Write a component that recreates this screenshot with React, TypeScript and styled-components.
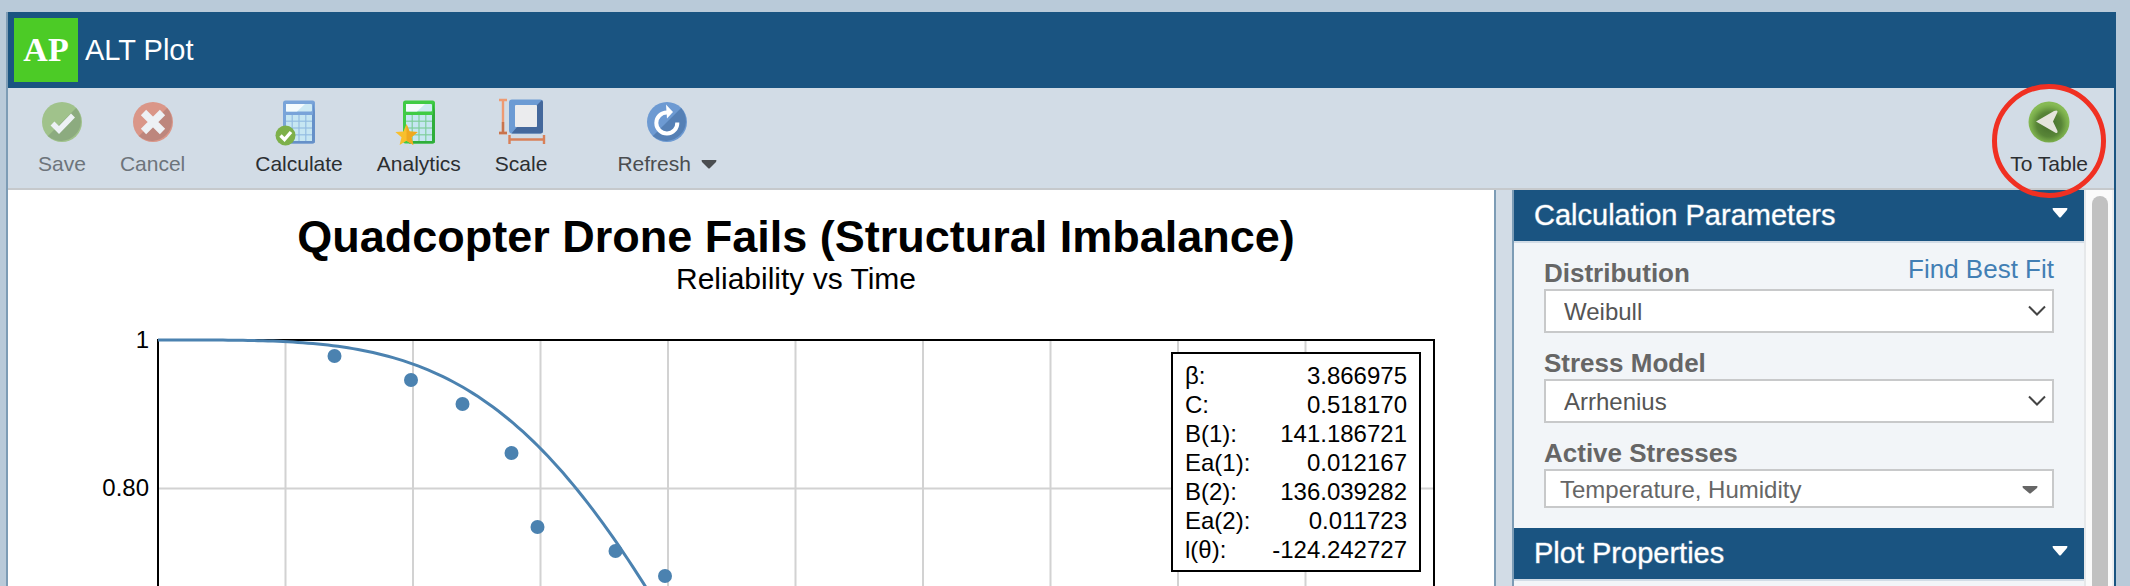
import React from "react";
import styled, { createGlobalStyle } from "styled-components";

const navy = "#1a5481";
const edge = "#7d9cb5";
const bar = "#d2dce6";
const steel = "#4b82b0";

const GlobalStyle = createGlobalStyle`
  *, *::before, *::after { box-sizing: border-box; }
  body {
    margin: 0;
    background: #b9cad9;
    font-family: "Liberation Sans", Arial, sans-serif;
    overflow: hidden;
  }
  button, select { font-family: inherit; }
`;

const Page = styled.div`
  display: flex;
  height: 100vh;
  padding: 12px 14px 0 6px;
`;

const Window = styled.div`
  display: flex;
  flex: 1;
  flex-direction: column;
  min-width: 0;
  border-left: 2px solid ${edge};
  border-right: 2px solid ${navy};
`;

const TitleBar = styled.header`
  display: flex;
  align-items: center;
  gap: 7px;
  height: 76px;
  padding: 6px;
  flex: none;
  background: ${navy};
  color: #fff;
`;

const Logo = styled.div`
  display: grid;
  place-items: center;
  width: 64px;
  height: 64px;
  background: #4ccb26;
  font: bold 34px/40px "Liberation Serif", "Times New Roman", serif;
`;

const AppName = styled.span`
  font-size: 29px;
  line-height: 34px;
`;

const Toolbar = styled.div`
  display: flex;
  gap: 36px;
  flex: none;
  height: 102px;
  padding: 12px 9px 0 13px;
  background: ${bar};
  border-bottom: 2px solid #c6c9cc;
`;

const ToolGroup = styled.div<{ $end?: boolean }>`
  display: flex;
  align-items: flex-start;
  margin-left: ${(p) => (p.$end ? "auto" : "0")};
`;

const ToolButton = styled.button<{ $tone?: string }>`
  position: relative;
  display: flex;
  flex-direction: column;
  align-items: center;
  gap: 8px;
  padding: 0 17px;
  border: 0;
  background: none;
  color: ${(p) => p.$tone ?? "#2b2e31"};
  font-size: 21px;
  line-height: 24px;
  white-space: nowrap;
`;

const ToolLabel = styled.span`
  display: flex;
  align-items: center;
  gap: 10px;
`;

const ToolIcon = styled.svg<{ $faded?: boolean }>`
  width: 44px;
  height: 44px;
  overflow: visible;
  opacity: ${(p) => (p.$faded ? 0.6 : 1)};
`;

const Highlight = styled.svg`
  position: absolute;
  top: -16px;
  left: 50%;
  z-index: 2;
  width: 114px;
  height: 114px;
  margin-left: -57px;
  pointer-events: none;
`;

const Main = styled.main`
  display: flex;
  flex: 1;
  min-height: 0;
`;

const PlotPane = styled.section`
  flex: 1;
  min-width: 0;
  padding: 22px 59px 0 149px;
  overflow: hidden;
  background: #fff;
  color: #000;
  text-align: center;
`;

const PlotTitle = styled.h1`
  margin: 0;
  font-size: 45px;
  line-height: 50px;
  white-space: nowrap;
`;

const PlotSubtitle = styled.p`
  margin: 0;
  font-size: 30px;
  line-height: 34px;
`;

const PlotArea = styled.div`
  position: relative;
  margin-top: 43px;
`;

const Chart = styled.svg`
  display: block;
  width: 100%;
  height: auto;
  overflow: visible;
  font-size: 24px;
`;

const Legend = styled.table`
  position: absolute;
  top: 13px;
  right: 14px;
  width: 250px;
  padding: 7px 12px 6px;
  border: 2px solid #000;
  border-spacing: 0;
  background: #fff;
  font-size: 24px;
  line-height: 29px;

  th, td { padding: 0; font-weight: normal; }
  th { text-align: left; }
  td { text-align: right; }
`;

const Splitter = styled.div`
  flex: none;
  width: 20px;
  background: ${bar};
  border-left: 2px solid ${edge};
  border-right: 2px solid ${edge};
`;

const SidePanel = styled.aside`
  flex: none;
  width: 572px;
  overflow: hidden;
  background: #f2f5f8;
  border-right: 2px solid #e6e8ea;
`;

const SectionHeader = styled.button`
  display: flex;
  align-items: center;
  justify-content: space-between;
  width: 100%;
  height: 53px;
  padding: 0 16px 2px 20px;
  border: 0;
  border-bottom: 2px solid ${bar};
  background: ${navy};
  color: #fff;
  font-size: 29px;
  line-height: 34px;
  -webkit-text-stroke: 1px rgba(255, 255, 255, 0.4);
`;

const SectionBody = styled.div`
  display: flex;
  flex-direction: column;
  gap: 15px;
  padding: 15px 30px 20px;
`;

const Field = styled.div`
  display: flex;
  flex-direction: column;
`;

const LabelRow = styled.div`
  display: flex;
  justify-content: space-between;
`;

const Label = styled.label`
  color: #666;
  font-size: 26px;
  font-weight: bold;
  line-height: 31px;
`;

const FitLink = styled.a`
  color: #427fb4;
  font-size: 26px;
  line-height: 22px;
  text-decoration: none;
`;

const SelectBox = styled.div`
  display: grid;
  align-items: center;

  > * { grid-area: 1 / 1; }
  > svg { justify-self: end; margin-right: 8px; pointer-events: none; }
`;

const Select = styled.select`
  width: 100%;
  height: 44px;
  padding: 2px 36px 0 18px;
  border: 2px solid #c8c9ca;
  border-radius: 0;
  appearance: none;
  background: #fff;
  color: #555;
  font-size: 24px;
  line-height: 28px;
`;

const MultiSelect = styled.button`
  display: flex;
  align-items: center;
  justify-content: space-between;
  height: 39px;
  padding: 2px 14px 0;
  border: 2px solid #c8c9ca;
  background: #fff;
  color: #666;
  font-size: 24px;
  line-height: 28px;
`;

const ScrollTrack = styled.div`
  flex: none;
  width: 28px;
  padding: 6px 4px 0 6px;
  background: #fafafa;
  border-right: 2px solid #eceef0;
`;

const ScrollThumb = styled.div`
  width: 16px;
  height: 100%;
  border-radius: 8px 8px 0 0;
  background: #c1c1c1;
`;

const Caret = ({ w = 16, h = 10, lift = 0 }: { w?: number; h?: number; lift?: number }) => (
  <svg width={w} height={h + lift} viewBox={`0 0 ${w} ${h + lift}`} aria-hidden="true">
    <path
      d={`M1 0H${w - 1}Q${w} 0 ${w - 1} 2L${w / 2 + 1} ${h - 1}Q${w / 2} ${h} ${w / 2 - 1} ${h - 1}L1 2Q0 0 1 0Z`}
      fill="currentColor"
    />
  </svg>
);

const Chevron = () => (
  <svg width="18" height="12" viewBox="0 0 18 12" fill="none" aria-hidden="true">
    <path d="M1 1.5L9 9.5L17 1.5" stroke="#444" strokeWidth="2" />
  </svg>
);

const SaveIcon = () => (
  <ToolIcon $faded viewBox="0 0 44 44" aria-hidden="true">
    <circle cx="22" cy="22" r="20" fill="#7fb24f" />
    <path d="M36.1 7.9A20 20 0 0 1 7.9 36.1Z" fill="#5f8b3c" />
    <path d="M12.5 23.5L19 30L33 15.5" fill="none" stroke="#fff" strokeWidth="5.5" />
  </ToolIcon>
);

const CancelIcon = () => (
  <ToolIcon $faded viewBox="0 0 44 44" aria-hidden="true">
    <circle cx="22" cy="22" r="20" fill="#e0684a" />
    <path d="M36.1 7.9A20 20 0 0 1 7.9 36.1Z" fill="#b04e38" />
    <path d="M12.5 12.5L31.5 31.5M31.5 12.5L12.5 31.5" stroke="#fff" strokeWidth="7.5" />
  </ToolIcon>
);

const Calculator = ({ frame, dark, grid }: { frame: string; dark: string; grid: string }) => (
  <>
    <rect x="6" y="0.5" width="32" height="43" rx="2.5" fill={frame} />
    <path d="M38 12V41a2.5 2.5 0 0 1-2.5 2.5H12L36 14V2Z" fill={dark} />
    <rect x="9" y="4" width="26" height="7.5" rx="1" fill="#cdeaf4" />
    <path d="M9 4H28L20 11.500H9Z" fill="#f4fbfd" />
    <rect x="9" y="15" width="26" height="26" fill={grid} />
    {[15, 21.8, 28.6, 35.4].map((y) =>
      [9, 15.8, 22.6, 29.4].map((x) => (
        <rect key={`${x}-${y}`} x={x} y={y} width="5.6" height="5.6" fill="#c6e6f2" />
      ))
    )}
  </>
);

const CalculateIcon = () => (
  <ToolIcon viewBox="0 0 44 44" aria-hidden="true">
    <Calculator frame="#79a4d9" dark="#6690c8" grid="#94bde2" />
    <circle cx="8.5" cy="35.5" r="10" fill="#7db04a" />
    <path d="M3.5 35.5L7.5 39.5L14 32" fill="none" stroke="#fff" strokeWidth="3.4" />
  </ToolIcon>
);

const AnalyticsIcon = () => (
  <ToolIcon viewBox="0 0 44 44" aria-hidden="true">
    <Calculator frame="#3fcb45" dark="#2fae3a" grid="#7fcf9c" />
    <path
      d="M9.5 24L12.6 31.4L20.6 32L14.5 37.2L16.4 45L9.5 40.8L2.6 45L4.5 37.2L-1.6 32L6.4 31.4Z"
      fill="#f8bf2d"
    />
    <path d="M9.5 24L12.6 31.4L20.6 32L14.5 37.2L16.4 45L9.5 40.8Z" fill="#efa91f" />
  </ToolIcon>
);

const ScaleIcon = () => (
  <ToolIcon viewBox="0 0 44 44" aria-hidden="true">
    <rect x="10" y="-0.5" width="34" height="34" rx="3" fill="#6c9bd4" />
    <path d="M44 2V31a2.5 2.5 0 0 1-2.5 2.5H12.5L18 27H38V5L43 0Z" fill="#44689c" />
    <rect x="16" y="5" width="22" height="22" rx="1" fill="#ebecee" />
    <path d="M0 0H8M4 0V33M0 33H8" fill="none" stroke="#ee9a72" strokeWidth="2.4" />
    <path d="M4 22V33M0 33H8" fill="none" stroke="#c9734c" strokeWidth="2.4" />
    <path d="M10.5 35V44M10.5 39.5H45M45 35V44" fill="none" stroke="#d98058" strokeWidth="2.4" />
  </ToolIcon>
);

const RefreshIcon = () => (
  <ToolIcon viewBox="0 0 44 44" aria-hidden="true">
    <circle cx="22" cy="22" r="20" fill="#6d9ad2" />
    <path d="M36.1 7.9A20 20 0 0 1 7.9 36.1Z" fill="#5580b5" />
    <path d="M22 12.5A10.5 10.5 0 1 0 32.3 22.5" fill="none" stroke="#fff" strokeWidth="4" />
    <path d="M21 4.5L28 12L22 18.5Z" fill="#fff" />
  </ToolIcon>
);

const BackIcon = () => (
  <ToolIcon viewBox="0 0 44 44" aria-hidden="true">
    <defs>
      <radialGradient id="back-fill" cx="50%" cy="56%" r="50%">
        <stop offset="0" stopColor="#466d2c" />
        <stop offset="0.6" stopColor="#588537" />
        <stop offset="0.85" stopColor="#78ab4a" />
        <stop offset="1" stopColor="#86ba55" />
      </radialGradient>
    </defs>
    <circle cx="22" cy="22" r="20.5" fill="url(#back-fill)" />
    <path d="M9 21.5L27 11Q31 9.500 30.500 12L26 21.5L30.500 31Q31 34 28 32.500Z" fill="#e4e4dc" />
  </ToolIcon>
);

const legendRows: [string, string][] = [
  ["β:", "3.866975"],
  ["C:", "0.518170"],
  ["B(1):", "141.186721"],
  ["Ea(1):", "0.012167"],
  ["B(2):", "136.039282"],
  ["Ea(2):", "0.011723"],
  ["l(θ):", "-124.242727"],
];

const failures = [
  [177.5, 17],
  [254, 41],
  [305.5, 65],
  [354.5, 114],
  [380.5, 188],
  [458.5, 212],
  [508, 237],
];

const SHAPE = 3.866975;
const SCALE = 616;
const HEIGHT = 741;

// Weibull reliability, R(t) = exp(-(t / scale) ^ shape)
const curve = Array.from({ length: 256 }, (_, i) => {
  const t = i * 5;
  const r = Math.exp(-Math.pow(t / SCALE, SHAPE));
  return `${t + 1},${(1 + HEIGHT * (1 - r)).toFixed(2)}`;
}).join(" ");

const ReliabilityChart = () => (
  <Chart viewBox="0 0 1278 743" role="img">
    <g stroke="#d2d2d2" strokeWidth="2">
      {Array.from({ length: 9 }, (_, i) => (
        <line key={i} x1={128.5 + i * 127.5} x2={128.5 + i * 127.5} y1="1" y2="742" />
      ))}
      {[1, 2, 3, 4].map((i) => (
        <line key={i} x1="1" x2="1276" y1={1 + i * 148.4} y2={1 + i * 148.4} />
      ))}
    </g>
    <path d="M1 742V1H1277V742" fill="none" stroke="#000" strokeWidth="2" />
    <polyline points={curve} fill="none" stroke={steel} strokeWidth="3" />
    {failures.map(([x, y]) => (
      <circle key={x} cx={x} cy={y} r="7" fill={steel} />
    ))}
    <g textAnchor="end">
      <text x="-8" y="9">1</text>
      <text x="-8" y="157">0.80</text>
    </g>
  </Chart>
);

export default function App() {
  return (
    <Page>
      <GlobalStyle />
      <Window>
        <TitleBar>
          <Logo>AP</Logo>
          <AppName>ALT Plot</AppName>
        </TitleBar>
        <Toolbar>
          <ToolGroup>
            <ToolButton $tone="#6d747b"><SaveIcon />Save</ToolButton>
            <ToolButton $tone="#6d747b"><CancelIcon />Cancel</ToolButton>
          </ToolGroup>
          <ToolGroup>
            <ToolButton><CalculateIcon />Calculate</ToolButton>
            <ToolButton><AnalyticsIcon />Analytics</ToolButton>
            <ToolButton><ScaleIcon />Scale</ToolButton>
          </ToolGroup>
          <ToolGroup>
            <ToolButton $tone="#4a4d50">
              <RefreshIcon />
              <ToolLabel>Refresh<Caret w={16} h={9} /></ToolLabel>
            </ToolButton>
          </ToolGroup>
          <ToolGroup $end>
            <ToolButton>
              <BackIcon />
              To Table
              <Highlight viewBox="0 0 114 114" aria-hidden="true">
                <circle cx="57" cy="57" r="54.5" fill="none" stroke="#f03022" strokeWidth="5" />
              </Highlight>
            </ToolButton>
          </ToolGroup>
        </Toolbar>
        <Main>
          <PlotPane>
            <PlotTitle>Quadcopter Drone Fails (Structural Imbalance)</PlotTitle>
            <PlotSubtitle>Reliability vs Time</PlotSubtitle>
            <PlotArea>
              <ReliabilityChart />
              <Legend>
                <tbody>
                  {legendRows.map(([name, value]) => (
                    <tr key={name}>
                      <th scope="row">{name}</th>
                      <td>{value}</td>
                    </tr>
                  ))}
                </tbody>
              </Legend>
            </PlotArea>
          </PlotPane>
          <Splitter />
          <SidePanel>
            <SectionHeader>Calculation Parameters<Caret lift={4} /></SectionHeader>
            <SectionBody>
              <Field>
                <LabelRow>
                  <Label htmlFor="distribution">Distribution</Label>
                  <FitLink href="#fit">Find Best Fit</FitLink>
                </LabelRow>
                <SelectBox>
                  <Select id="distribution"><option>Weibull</option></Select>
                  <Chevron />
                </SelectBox>
              </Field>
              <Field>
                <Label htmlFor="model">Stress Model</Label>
                <SelectBox>
                  <Select id="model"><option>Arrhenius</option></Select>
                  <Chevron />
                </SelectBox>
              </Field>
              <Field>
                <Label htmlFor="stresses">Active Stresses</Label>
                <MultiSelect id="stresses">Temperature, Humidity<Caret w={16} h={8} /></MultiSelect>
              </Field>
            </SectionBody>
            <SectionHeader>Plot Properties<Caret lift={4} /></SectionHeader>
          </SidePanel>
          <ScrollTrack>
            <ScrollThumb />
          </ScrollTrack>
        </Main>
      </Window>
    </Page>
  );
}
